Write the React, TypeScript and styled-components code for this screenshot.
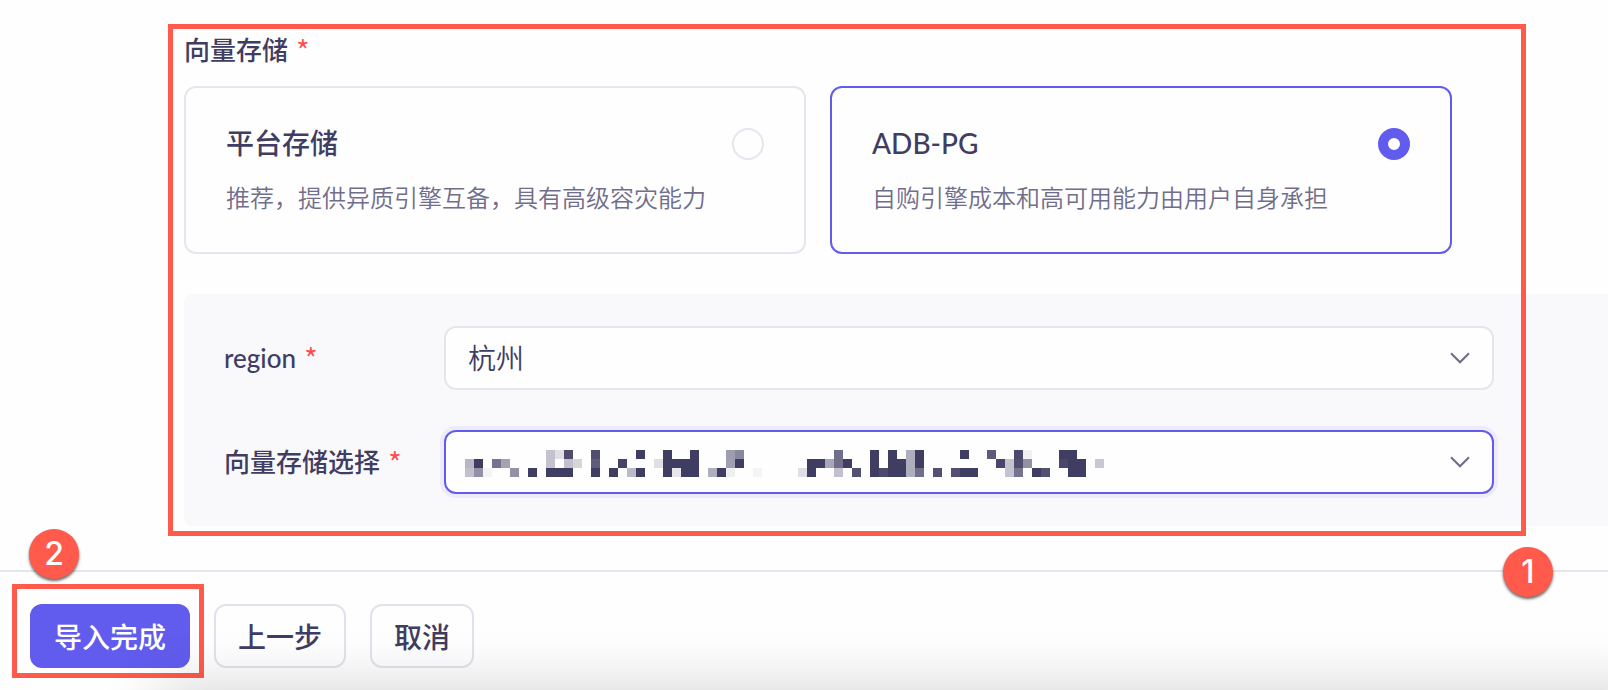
import React, { useState } from "react";
import styled, { createGlobalStyle, css } from "styled-components";

const ink = "#403d62";
const muted = "#716e8c";
const primary = "#615ced";
const line = "#e3e7ed";
const mark = "#ff5a4c";

const GlobalStyle = createGlobalStyle`
  * { box-sizing: border-box; }
  body {
    margin: 0;
    background: #fefefe;
    color: ${ink};
    font-family: Lato, "Noto Sans CJK SC", sans-serif;
  }
`;

const Page = styled.div`
  display: flex;
  flex-direction: column;
  min-height: 100vh;
  overflow: hidden;
`;

const Main = styled.main`
  position: relative;
  padding: 30px 0 44px 184px;
`;

const StoreGroup = styled.fieldset`
  margin: 0 156px 40px 0;
  padding: 0;
  border: 0;
`;

const labelText = css`
  font-size: 26px;
  line-height: 40px;
  font-weight: 500;
`;

const Legend = styled.legend`
  ${labelText}
  height: 40px;
  padding: 0;
  margin-bottom: 16px;
`;

const Star = styled.span`
  margin-left: 8px;
  color: #ff4d4f;
  font-family: "Noto Sans CJK SC", sans-serif;
  font-size: 30px;
  font-weight: 350;
  line-height: 24px;
  vertical-align: -3px;
`;

const Cards = styled.div`
  display: grid;
  grid-template-columns: 1fr 1fr;
  gap: 24px;
`;

const Card = styled.label<{ $active: boolean }>`
  display: flex;
  justify-content: space-between;
  gap: 16px;
  height: 168px;
  padding: 40px;
  border: 2px solid ${(p) => (p.$active ? primary : line)};
  border-radius: 12px;
  cursor: pointer;
`;

const CardText = styled.span`
  display: flex;
  flex-direction: column;
  gap: 24px;
`;

const CardTitle = styled.span`
  font-size: 28px;
  line-height: 30px;
  font-weight: 500;
`;

const CardHint = styled.span`
  color: ${muted};
  font-size: 24px;
  line-height: 32px;
  font-weight: 350;
`;

const Radio = styled.input`
  appearance: none;
  flex: none;
  width: 32px;
  height: 32px;
  margin: 0;
  border: 2px solid #e5e6ee;
  border-radius: 50%;
  &:checked {
    border: 10px solid ${primary};
    background: #fff;
  }
`;

const Panel = styled.section`
  display: grid;
  gap: 40px;
  padding: 32px 114px 32px 40px;
  border-radius: 8px 0 0 8px;
  background: #f9f9fb;
`;

const Field = styled.div`
  display: grid;
  grid-template-columns: 220px 1fr;
  align-items: center;
`;

const FieldLabel = styled.label`
  ${labelText}
`;

const SelectBox = styled.div`
  position: relative;
`;

const Select = styled.select<{ $active?: boolean }>`
  appearance: none;
  display: block;
  width: 100%;
  height: 64px;
  padding: 0 64px 0 22px;
  border: 2px solid ${(p) => (p.$active ? primary : line)};
  border-radius: 12px;
  outline: none;
  background: #fefefe;
  box-shadow: ${(p) => (p.$active ? "0 0 0 4px #edebfc" : "none")};
  color: ${ink};
  font-family: inherit;
  font-size: 28px;
  font-weight: 350;
`;

const Arrow = styled.svg`
  position: absolute;
  top: 24px;
  right: 22px;
  pointer-events: none;
`;

const Mosaic = styled.svg`
  position: absolute;
  top: 20px;
  left: 21px;
  pointer-events: none;
`;

const Footer = styled.footer`
  position: relative;
  display: flex;
  flex: 1;
  align-items: flex-start;
  gap: 24px;
  padding: 32px 30px 22px;
  border-top: 2px solid ${line};

  /* soft shade rising from the lower edge */
  &::after {
    content: "";
    position: absolute;
    top: 100%;
    left: 160px;
    right: -60px;
    height: 60px;
    box-shadow: 0 0 60px rgba(0, 0, 0, 0.18);
    pointer-events: none;
  }
`;

const Button = styled.button<{ $primary?: boolean }>`
  height: 64px;
  padding: 0 22px;
  border: 2px solid ${(p) => (p.$primary ? primary : "#e0e3ea")};
  border-radius: 12px;
  background: ${(p) => (p.$primary ? primary : "transparent")};
  color: ${(p) => (p.$primary ? "#fff" : ink)};
  font-family: inherit;
  font-size: 28px;
  font-weight: 500;
  white-space: nowrap;
`;

const PrimarySlot = styled.div`
  position: relative;
`;

const Frame = styled.div<{ $inset: string }>`
  position: absolute;
  inset: ${(p) => p.$inset};
  border: 5px solid ${mark};
  pointer-events: none;
`;

const Badge = styled.span<{ $place: string }>`
  position: absolute;
  inset: ${(p) => p.$place};
  z-index: 1;
  display: flex;
  align-items: center;
  justify-content: center;
  width: 50px;
  height: 50px;
  border-radius: 50%;
  background: ${mark};
  box-shadow: 0 2px 3px rgba(0, 0, 0, 0.6);
  color: #fff;
  font-family: Inter, sans-serif;
  font-size: 32px;
  font-weight: 500;
  line-height: 50px;
`;

/* Masked value: each row lists [column, opacity in percent] */
const mask: [number, number][][] = [
  [[9, 31], [10, 16], [11, 92], [14, 91], [19, 100], [22, 100], [25, 100], [29, 51], [30, 61],
   [41, 75], [45, 100], [47, 100], [49, 41], [50, 100], [55, 100], [58, 84], [61, 93], [62, 7], [66, 100], [67, 100]],
  [[0, 37], [1, 100], [3, 72], [4, 47], [9, 31], [11, 32], [12, 21], [14, 84], [17, 97], [21, 16],
   [22, 100], [23, 100], [24, 100], [25, 100], [29, 49], [30, 100], [38, 100], [39, 100], [40, 45],
   [41, 75], [42, 100], [45, 100], [47, 100], [48, 100], [49, 41], [50, 100], [59, 95], [60, 30],
   [61, 91], [62, 57], [66, 95], [67, 100], [68, 100], [70, 28]],
  [[0, 32], [1, 57], [2, 5], [5, 57], [7, 100], [9, 100], [10, 100], [11, 100], [14, 100], [16, 100],
   [18, 35], [19, 100], [22, 100], [23, 12], [24, 100], [25, 100], [27, 41], [28, 100], [29, 8],
   [32, 5], [37, 16], [38, 100], [41, 32], [43, 90], [45, 100], [46, 93], [47, 100], [48, 100],
   [49, 41], [50, 75], [52, 90], [54, 90], [55, 100], [56, 100], [60, 30], [61, 72], [63, 100],
   [64, 90], [67, 100], [68, 100]],
];

const Chevron = () => (
  <Arrow width="24" height="16" viewBox="0 0 24 16" fill="none" aria-hidden="true">
    <path d="M3 3.2 L12 12.2 L21 3.2" stroke={muted} strokeWidth="2.2" />
  </Arrow>
);

const stores = [
  { id: "platform", title: "平台存储", hint: "推荐，提供异质引擎互备，具有高级容灾能力" },
  { id: "adb", title: "ADB-PG", hint: "自购引擎成本和高可用能力由用户自身承担" },
];

export default function App() {
  const [store, setStore] = useState("adb");
  return (
    <Page>
      <GlobalStyle />
      <Main>
        <StoreGroup>
          <Legend>
            向量存储<Star>*</Star>
          </Legend>
          <Cards>
            {stores.map((s) => (
              <Card key={s.id} $active={store === s.id}>
                <CardText>
                  <CardTitle>{s.title}</CardTitle>
                  <CardHint>{s.hint}</CardHint>
                </CardText>
                <Radio
                  type="radio"
                  name="store"
                  checked={store === s.id}
                  onChange={() => setStore(s.id)}
                />
              </Card>
            ))}
          </Cards>
        </StoreGroup>
        <Panel>
          <Field>
            <FieldLabel htmlFor="region">
              region<Star>*</Star>
            </FieldLabel>
            <SelectBox>
              <Select id="region">
                <option>杭州</option>
              </Select>
              <Chevron />
            </SelectBox>
          </Field>
          <Field>
            <FieldLabel htmlFor="instance">
              向量存储选择<Star>*</Star>
            </FieldLabel>
            <SelectBox>
              <Select id="instance" $active>
                <option></option>
              </Select>
              <Mosaic width="639" height="27" shapeRendering="crispEdges" aria-hidden="true">
                {mask.map((row, y) =>
                  row.map(([x, a]) => (
                    <rect key={`${x}-${y}`} x={x * 9} y={y * 9} width="9" height="9" fill={ink} fillOpacity={a / 100} />
                  ))
                )}
              </Mosaic>
              <Chevron />
            </SelectBox>
          </Field>
        </Panel>
        <Frame $inset="24px 82px 34px 168px" />
      </Main>
      <Footer>
        <PrimarySlot>
          <Button type="button" $primary>
            导入完成
          </Button>
          <Frame $inset="-20px -14px -10px -18px" />
        </PrimarySlot>
        <Button type="button">上一步</Button>
        <Button type="button">取消</Button>
        <Badge $place="-43px auto auto 29px">2</Badge>
        <Badge $place="-25px 55px auto auto">1</Badge>
      </Footer>
    </Page>
  );
}
